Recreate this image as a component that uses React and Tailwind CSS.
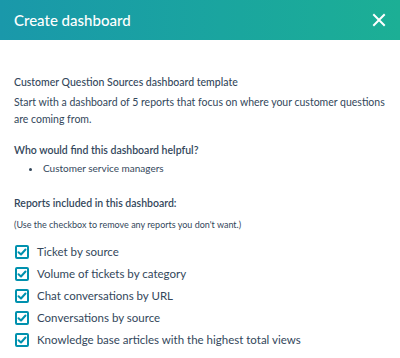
import React, { useState } from 'react'

const REPORTS = [
  'Ticket by source',
  'Volume of tickets by category',
  'Chat conversations by URL',
  'Conversations by source',
  'Knowledge base articles with the highest total views'
]

function Checkbox({ checked, onChange }) {
  return (
    <button
      onClick={onChange}
      className="w-[14px] h-[14px] flex-shrink-0 border-2 border-[#0091ae] rounded-[2px] bg-white flex items-center justify-center"
    >
      {checked && (
        <svg width="10" height="10" viewBox="0 0 10 10" fill="none">
          <path d="M1.5 5.2 L4 7.5 L8.5 2.5" stroke="#0091ae" strokeWidth="2" strokeLinecap="round" strokeLinejoin="round" />
        </svg>
      )}
    </button>
  )
}

export default function App() {
  const [checked, setChecked] = useState(REPORTS.map(() => true))

  const toggle = (i) => {
    setChecked(prev => prev.map((c, j) => (j === i ? !c : c)))
  }

  return (
    <div className="w-[400px] h-[358px] bg-white overflow-hidden text-[#33475b]" style={{ fontFamily: 'Lato, "Open Sans", sans-serif' }}>
      {/* Header */}
      <div className="h-[40px] px-[14px] flex items-center justify-between bg-gradient-to-r from-[#1a98aa] to-[#1caf95]">
        <h1 className="text-white text-[15px] font-medium">Create dashboard</h1>
        <button className="text-white">
          <svg width="14" height="14" viewBox="0 0 14 14">
            <path d="M2 2 L12 12 M12 2 L2 12" stroke="white" strokeWidth="2" strokeLinecap="square" />
          </svg>
        </button>
      </div>

      {/* Body */}
      <div className="px-[14px] pt-[34px]">
        <p className="text-[10.5px] leading-[17px] font-medium">Customer Question Sources dashboard template</p>
        <p className="text-[10.5px] leading-[17px] mt-[3px]">
          Start with a dashboard of 5 reports that focus on where your customer questions are coming from.
        </p>

        <p className="text-[10.5px] leading-[17px] font-semibold mt-[14px]">Who would find this dashboard helpful?</p>
        <ul className="mt-[1px] pl-[28px] list-disc text-[10px] leading-[17px]">
          <li className="pl-[1px]">Customer service managers</li>
        </ul>

        <p className="text-[10.5px] leading-[17px] font-semibold mt-[18px]">Reports included in this dashboard:</p>
        <p className="text-[9px] leading-[14px] mt-[6px]">(Use the checkbox to remove any reports you don't want.)</p>

        <div className="mt-[12px] flex flex-col gap-[6px] pl-[1px]">
          {REPORTS.map((r, i) => (
            <label key={r} className="flex items-center gap-[8px] h-[16px]">
              <Checkbox checked={checked[i]} onChange={() => toggle(i)} />
              <span className="text-[11.5px] leading-[16px]">{r}</span>
            </label>
          ))}
        </div>
      </div>
    </div>
  )
}
